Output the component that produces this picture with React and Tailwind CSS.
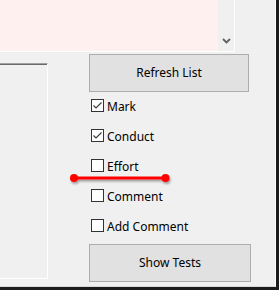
import React from 'react';

const font = { fontFamily: '"Noto Sans", "Liberation Sans", sans-serif' };

function CheckBox({ label, checked }) {
  return (
    <div className="flex items-center h-[13px] ml-[2px]">
      <div className="w-[13px] h-[13px] border border-[#333333] bg-white flex items-center justify-center">
        {checked && (
          <svg width="11" height="11" viewBox="0 0 11 11">
            <polyline points="1.5,5.5 4,8 9.5,2.5" fill="none" stroke="#3c3c3c" strokeWidth="1.2" />
          </svg>
        )}
      </div>
      <span className="ml-[3px] pt-[2px] text-[12px] leading-none text-black">{label}</span>
    </div>
  );
}

export default function App() {
  return (
    <div className="w-[279px] h-[290px] bg-[#1c1c1c] overflow-hidden" style={font}>
      <div className="relative w-[276px] h-[287px] bg-[#f0f0f0] border-r border-b border-r-white border-b-[#d9d9d9] flex flex-col">
        {/* text area */}
        <div className="flex w-[235px] h-[52px] border-r border-b border-white">
          <div className="w-[218px] h-full bg-[#fff0f0]" />
          <div className="flex-1 flex items-end justify-center pb-[7px]">
            <svg width="9" height="6" viewBox="0 0 9 6">
              <polyline points="1,1 4.5,4.5 8,1" fill="none" stroke="#606060" strokeWidth="1.8" />
            </svg>
          </div>
        </div>

        <div className="flex items-start">
          {/* left list */}
          <div className="mt-[11px] w-[48px] h-[216px] border-t border-t-[#a0a0a0] border-r border-b border-r-white border-b-white shadow-[inset_0_1px_0_#696969]" />

          {/* controls */}
          <div className="ml-[41px] mt-[2px] flex flex-col">
            <button className="w-[160px] h-[38px] border border-[#adadad] bg-[#e1e1e1] text-[12px] text-black">
              Refresh List
            </button>
            <div className="mt-[7px] flex flex-col gap-[17px]">
              <CheckBox label="Mark" checked />
              <CheckBox label="Conduct" checked />
              <CheckBox label="Effort" />
              <CheckBox label="Comment" />
              <CheckBox label="Add Comment" />
            </div>
            <button className="mt-[12px] w-[162px] h-[38px] border border-[#adadad] bg-[#e1e1e1] text-[12px] text-black">
              Show Tests
            </button>
          </div>
        </div>

        {/* annotation */}
        <svg className="absolute left-[66px] top-[170px]" width="110" height="20" viewBox="0 0 110 20">
          <defs>
            <filter id="sh" x="-10%" y="-50%" width="120%" height="200%">
              <feDropShadow dx="1" dy="2" stdDeviation="1.2" floodColor="#000" floodOpacity="0.35" />
            </filter>
          </defs>
          <g filter="url(#sh)">
            <line x1="8" y1="8" x2="99.5" y2="8" stroke="#ff0000" strokeWidth="3" />
            <circle cx="8" cy="8" r="4" fill="#ff0000" />
            <circle cx="99.5" cy="8" r="4" fill="#ff0000" />
          </g>
        </svg>
      </div>
    </div>
  );
}
